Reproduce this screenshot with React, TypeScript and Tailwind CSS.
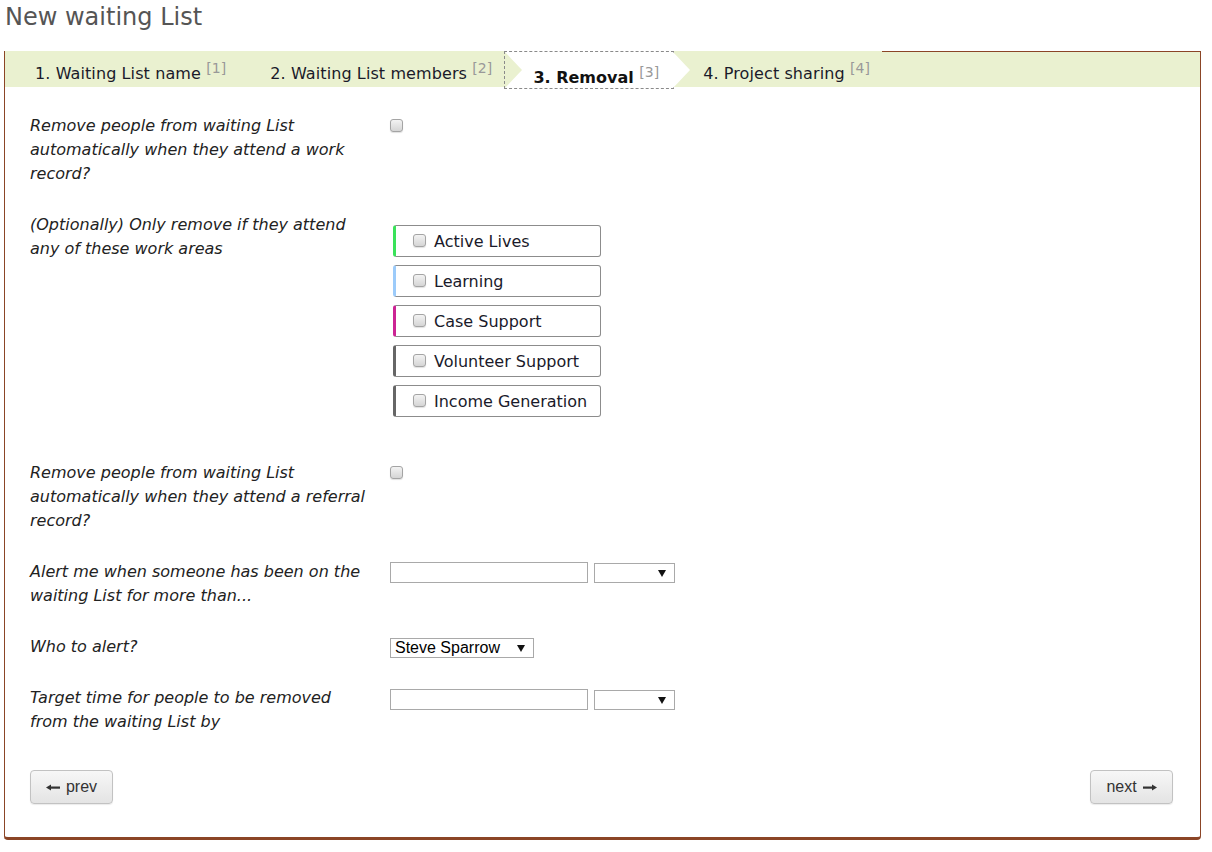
import React from "react";

const Checkbox = () => (
  <span className="block w-[13px] h-[13px] shrink-0 rounded-[3px] border border-[#a4a4a4] bg-linear-to-b from-[#f3f3f3] to-[#d5d5d5] shadow-[0_1px_1px_rgba(0,0,0,0.12)]" />
);

const Caret = () => (
  <svg width="8" height="7" viewBox="0 0 8 7" className="shrink-0">
    <polygon points="0,0 8,0 4,7" fill="#111" />
  </svg>
);

const ArrowLeft = () => (
  <svg width="14" height="7" viewBox="0 0 14 7">
    <polygon points="0,3.5 5,0.5 5,6.5" fill="#333" />
    <rect x="4" y="2.5" width="10" height="2.2" fill="#333" />
  </svg>
);

const ArrowRight = () => (
  <svg width="14" height="7" viewBox="0 0 14 7">
    <polygon points="14,3.5 9,0.5 9,6.5" fill="#333" />
    <rect x="0" y="2.5" width="10" height="2.2" fill="#333" />
  </svg>
);

const Sup = ({ n }: { n: string }) => (
  <span className="text-[14px] leading-none text-[#999] align-[6px] font-normal">[{n}]</span>
);

const areas = [
  { name: "Active Lives", color: "border-l-[#3ae25a]" },
  { name: "Learning", color: "border-l-[#9ccbfa]" },
  { name: "Case Support", color: "border-l-[#cc2494]" },
  { name: "Volunteer Support", color: "border-l-[#666666]" },
  { name: "Income Generation", color: "border-l-[#666666]" },
];

const Label = ({ children }: { children: React.ReactNode }) => (
  <div className="w-[340px] mr-[20px] shrink-0 italic text-[16px] leading-[24px] text-[#222]">{children}</div>
);

const TextInput = () => <div className="w-[198px] h-[21px] border border-[#a9a9a9] bg-white" />;

const SmallSelect = () => (
  <div className="w-[81px] h-[20px] mt-[1px] border border-[#a9a9a9] bg-white flex items-center justify-end pr-[8px]">
    <Caret />
  </div>
);

export default function App() {
  return (
    <div className="w-[1212px] h-[852px] bg-white font-['DejaVu_Sans',Verdana,sans-serif] text-[#222] overflow-hidden">
      <h1 className="pl-[5px] pt-[3px] text-[24px] leading-[28px] text-[#555] font-normal">New waiting List</h1>
      <div className="mt-[20px] ml-[4px] w-[1197px] border-l border-r border-b-[3px] border-[#8b4526] rounded-b-[4px]">
        {/* tabs */}
        <div className="flex h-[36px] text-[16px] leading-[24px] text-[#1a1a2a]">
          <div className="bg-[#eaf1d0] pl-[30px] pr-[14px] pt-[10px] whitespace-nowrap tracking-[0.1px]">
            1. Waiting List name <Sup n="1" />
          </div>
          <div className="bg-[#eaf1d0] pl-[30px] pr-[13px] pt-[10px] whitespace-nowrap tracking-[0.1px]">
            2. Waiting List members <Sup n="2" />
          </div>
          <div className="relative z-10 bg-white mt-[1px] h-[36px] pl-[28px] pr-[14px] pt-[13px] whitespace-nowrap font-bold text-[#111] outline outline-1 outline-dashed outline-[#8a8a8a]">
            <span className="absolute left-0 top-0 w-0 h-0 border-y-[18px] border-y-transparent border-l-[17px] border-l-[#eaf1d0]" />
            3. Removal <Sup n="3" />
            <span className="absolute left-full top-0 w-0 h-0 border-y-[18px] border-y-transparent border-l-[17px] border-l-white" />
          </div>
          <div className="bg-[#eaf1d0] pl-[30px] pr-[12px] pt-[10px] whitespace-nowrap tracking-[0.1px]">
            4. Project sharing <Sup n="4" />
          </div>
          <div className="flex-1 bg-[#eaf1d0] border-t border-[#8b4526]" />
        </div>

        {/* body */}
        <div className="pl-[25px] pr-[27px] pt-[27px] pb-[33px]">
          <div className="flex mb-[27px]">
            <Label>Remove people from waiting List automatically when they attend a work record?</Label>
            <div className="mt-[5px] flex items-start"><Checkbox /></div>
          </div>

          <div className="flex mb-[27px]">
            <Label>(Optionally) Only remove if they attend any of these work areas</Label>
            <div className="ml-[3px] mt-[12px] mb-[17px] flex flex-col gap-[8px]">
              {areas.map((a) => (
                <div
                  key={a.name}
                  className={`w-[208px] h-[32px] flex items-start pt-[4px] pl-[17px] gap-[8px] rounded-[3px] border border-[#8c8c8c] border-l-[3px] ${a.color} text-[16px] leading-[24px] text-[#1a1a2a]`}
                >
                  <span className="mt-[4px] flex"><Checkbox /></span>
                  <span>{a.name}</span>
                </div>
              ))}
            </div>
          </div>

          <div className="flex mb-[27px]">
            <Label>Remove people from waiting List automatically when they attend a referral record?</Label>
            <div className="mt-[5px] flex items-start"><Checkbox /></div>
          </div>

          <div className="flex mb-[27px]">
            <Label>Alert me when someone has been on the waiting List for more than...</Label>
            <div className="mt-[2px] flex items-start gap-[6px]">
              <TextInput />
              <SmallSelect />
            </div>
          </div>

          <div className="flex mb-[27px]">
            <Label>Who to alert?</Label>
            <div className="mt-[3px] w-[144px] h-[20px] border border-[#a9a9a9] bg-white flex items-center justify-between pl-[4px] pr-[8px] font-['Liberation_Sans',Arial,sans-serif] text-[16px] leading-[18px] text-black">
              <span>Steve Sparrow</span>
              <Caret />
            </div>
          </div>

          <div className="flex mb-[36px]">
            <Label>Target time for people to be removed from the waiting List by</Label>
            <div className="mt-[3px] flex items-start gap-[6px]">
              <TextInput />
              <SmallSelect />
            </div>
          </div>

          <div className="flex justify-between font-['Liberation_Sans',Arial,sans-serif] text-[16px] text-[#333]">
            <button className="w-[83px] h-[34px] flex items-center justify-center gap-[6px] rounded-[4px] border border-[#c2c2c2] bg-linear-to-b from-[#f7f7f7] to-[#e4e4e4] shadow-[0_1px_1px_rgba(0,0,0,0.08)]">
              <ArrowLeft />
              <span>prev</span>
            </button>
            <button className="w-[83px] h-[34px] flex items-center justify-center gap-[6px] rounded-[4px] border border-[#c2c2c2] bg-linear-to-b from-[#f7f7f7] to-[#e4e4e4] shadow-[0_1px_1px_rgba(0,0,0,0.08)]">
              <span>next</span>
              <ArrowRight />
            </button>
          </div>
        </div>
      </div>
    </div>
  );
}
